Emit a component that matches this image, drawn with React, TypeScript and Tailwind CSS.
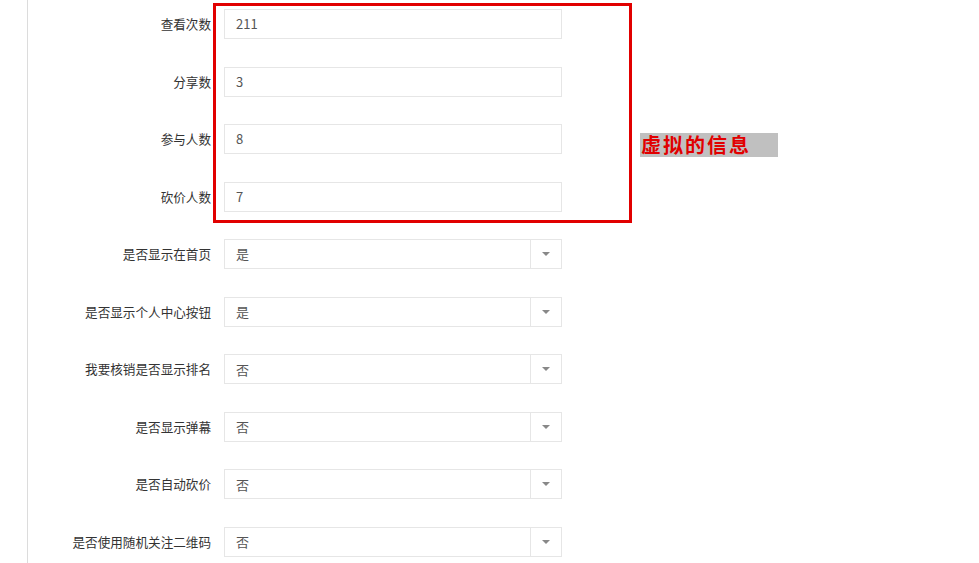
import React from "react";

const inputs = [
  { label: "查看次数", value: "211" },
  { label: "分享数", value: "3" },
  { label: "参与人数", value: "8" },
  { label: "砍价人数", value: "7" },
];

const selects = [
  { label: "是否显示在首页", value: "是" },
  { label: "是否显示个人中心按钮", value: "是" },
  { label: "我要核销是否显示排名", value: "否" },
  { label: "是否显示弹幕", value: "否" },
  { label: "是否自动砍价", value: "否" },
  { label: "是否使用随机关注二维码", value: "否" },
];

const font = { fontFamily: '"Noto Sans CJK SC", "Noto Sans", sans-serif' };

function Row({ label, children }: { label: string; children: React.ReactNode }) {
  return (
    <div className="flex items-center h-[30px]">
      <div className="w-[183px] text-right text-[12.6px] text-[#333] leading-[30px] whitespace-nowrap">{label}</div>
      <div className="ml-[13px] w-[338px] h-[30px]">{children}</div>
    </div>
  );
}

export default function App() {
  return (
    <div className="relative w-[979px] h-[563px] bg-white overflow-hidden" style={font}>
      <div className="ml-[27px] h-full border-l border-[#dcdcdc] pt-[9px] flex flex-col gap-[27.56px]">
        {inputs.map((r) => (
          <Row key={r.label} label={r.label}>
            <div className="h-full border border-[#e6e6e6] pl-[11px] flex items-center text-[13px] text-[#555]">
              {r.value}
            </div>
          </Row>
        ))}
        {selects.map((r) => (
          <Row key={r.label} label={r.label}>
            <div className="h-full border border-[#e6e6e6] flex">
              <div className="flex-1 pl-[11px] flex items-center text-[13px] text-[#555]">{r.value}</div>
              <div className="w-[31px] border-l border-[#e6e6e6] flex items-center justify-center">
                <div className="w-0 h-0 border-l-[4px] border-r-[4px] border-t-[4px] border-l-transparent border-r-transparent border-t-[#888]" />
              </div>
            </div>
          </Row>
        ))}
      </div>

      <div className="absolute left-[213px] top-[3px] w-[419px] h-[220px] border-[3px] border-[#e10000]" />

      <div
        className="absolute left-[640px] top-[133px] w-[138px] h-[24px] bg-[#c0c0c0] text-[#e10000] font-bold text-[20px] leading-[24px] tracking-[2px] pl-[1px] whitespace-nowrap"
        style={{ fontFamily: '"Noto Sans CJK SC", sans-serif' }}
      >
        虚拟的信息
      </div>
    </div>
  );
}
